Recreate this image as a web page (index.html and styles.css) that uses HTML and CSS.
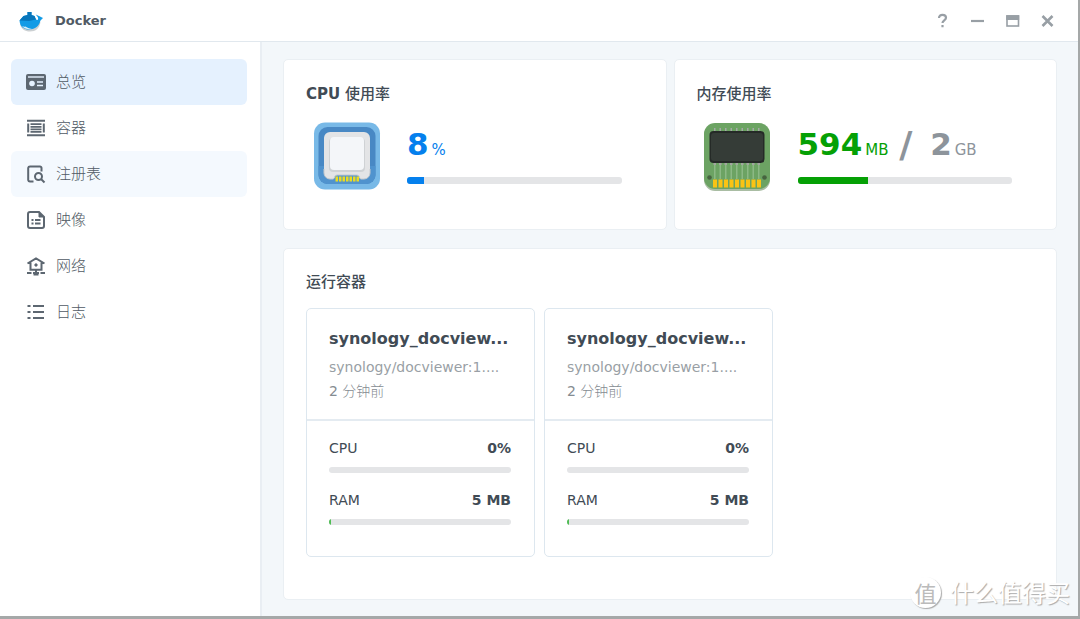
FILE: index.html
```html
<!DOCTYPE html>
<html lang="zh-CN">
<head>
<meta charset="utf-8">
<title>Docker</title>
<link rel="stylesheet" href="styles.css">
</head>
<body>
<div class="window">
  <header class="titlebar">
    <svg class="logo" width="26" height="22" viewBox="0 0 26 22" aria-hidden="true">
      <path d="M2 14c1 5 5 7.500 10 7.500 6 0 9-3 10.500-9l-3-2z" fill="#8d969c" opacity=".45"/>
      <path d="M1.500 10.500 5.500 6l4-1V2h4v3l3 1 1.500 3.500 1.500.500c.8-.6.8-1.500.2-3L17.700 4.500l3.300 1.500 4 2-2.500 2.500C21 16 17.500 19.500 11 19.500c-5 0-9-2.500-9.500-9z" fill="#129be6"/>
      <path d="M1.500 10.500 5.500 6l4-1V2h4v3l3 1 1.500 3.500-7 1.500z" fill="#0876bb"/>
      <path d="M4 16c2.500 3 6 3.800 10 3-3-.3-5-1.500-6.500-2.500-1 .3-2 .3-3.500-.5z" fill="#d9edf8"/>
    </svg>
    <h1 class="app-name">Docker</h1>
    <div class="controls">
      <button class="control" aria-label="帮助"><svg width="15" height="16" viewBox="0 0 15 16"><path d="M4 5C4 2.800 5.500 1.800 7.500 1.800S11 3 11 4.800c0 2.500-3.500 2.700-3.500 5.200M7.500 12v2.200" fill="none" stroke="#989fa5" stroke-width="2.200"/></svg></button>
      <button class="control" aria-label="最小化"><svg width="15" height="16" viewBox="0 0 15 16"><path d="M1 8h13" stroke="#989fa5" stroke-width="2.200"/></svg></button>
      <button class="control" aria-label="最大化"><svg width="15" height="16" viewBox="0 0 15 16"><rect x="2" y="3" width="11.500" height="10" fill="none" stroke="#989fa5" stroke-width="1.600"/><path d="M1.200 2.200h13V7h-13z" fill="#989fa5"/></svg></button>
      <button class="control" aria-label="关闭"><svg width="15" height="16" viewBox="0 0 15 16"><path d="m2.500 3 10 10M12.500 3l-10 10" stroke="#989fa5" stroke-width="2.600"/></svg></button>
    </div>
  </header>
  <div class="body">
    <nav class="sidebar">
      <a class="nav-item selected" href="#overview"><svg width="20" height="20" viewBox="0 0 20 20"><rect y="2" width="20" height="16" rx="2" fill="#5d6771"/><path d="M2 5h16" stroke="#e5f1fe" stroke-width="1.400"/><circle cx="6" cy="11.500" r="2.800" fill="#e5f1fe"/><path d="M11 10h6M11 13.500h6" stroke="#e5f1fe" stroke-width="1.400"/></svg>总览</a>
      <a class="nav-item" href="#container"><svg width="20" height="20" viewBox="0 0 20 20"><path d="M1 2.800h18M1 17.200h18M2.200 5.500v9M17.800 5.500v9" stroke="#5d6771" stroke-width="2"/><path d="M4.500 6.200h11M4.500 8.800h11M4.500 11.300h11M4.500 13.900h11" stroke="#5d6771" stroke-width="1.700"/></svg>容器</a>
      <a class="nav-item hovered" href="#registry"><svg width="20" height="20" viewBox="0 0 20 20" fill="none" stroke="#5d6771" stroke-width="2"><path d="M7.500 17.500H4A1.800 1.800 0 0 1 2.200 16V4A1.800 1.800 0 0 1 4 2.500h10A1.500 1.500 0 0 1 15.500 4v3.500"/><circle cx="12.500" cy="12.500" r="3.500"/><path d="m15 15 3.500 3.500"/></svg>注册表</a>
      <a class="nav-item" href="#image"><svg width="20" height="20" viewBox="0 0 20 20" fill="none" stroke="#5d6771" stroke-width="2"><path d="M13 2H4a2 2 0 0 0-2 2v12a2 2 0 0 0 2 2h12a2 2 0 0 0 2-2V7z"/><path d="M13 2v5h5z" fill="#5d6771" stroke-width="1"/><path d="M5.500 10h2M9 10h5.500M5.500 13.500h2M9 13.500h5.500"/></svg>映像</a>
      <a class="nav-item" href="#network"><svg width="20" height="20" viewBox="0 0 20 20" fill="none" stroke="#5d6771" stroke-width="2"><path d="M1.500 7.500 10 2.500l8.500 5M4.500 6.500v7.200h11V6.500M10 13.700V18M1 17h4.500M7 17h6M14.500 17H19M7.500 18.500h5"/><circle cx="10" cy="9" r="1.200" fill="#5d6771" stroke-width="1"/></svg>网络</a>
      <a class="nav-item" href="#log"><svg width="20" height="20" viewBox="0 0 20 20"><path d="M1.500 4h3M7 4h11M1.500 10h3M7 10h11M1.500 16h3M7 16h11" stroke="#5d6771" stroke-width="2.200"/></svg>日志</a>
    </nav>
    <main class="main">
      <div class="usage">
        <section class="panel">
          <h2 class="panel-title"><strong>CPU</strong> 使用率</h2>
          <div class="meter">
            <svg class="chip" width="68" height="70" viewBox="0 0 68 70" aria-hidden="true">
              <rect x="1" y="1.500" width="66" height="67" rx="11" fill="#78b9e7"/>
              <rect x="5.500" y="6" width="57" height="57" rx="9" fill="#4888c4"/>
              <path d="M5.500 45v9a9 9 0 0 0 9 9h39a9 9 0 0 0 9-9v-9z" fill="#5093ce"/>
              <path d="M17 11h34a6 6 0 0 1 6 6v35a6 6 0 0 1-6 6h-3c-2 0-1-4-4-4H24c-3 0-2 4-4 4h-3a6 6 0 0 1-6-6V17a6 6 0 0 1 6-6z" fill="#e3e4e6"/>
              <path d="M11 48v4a6 6 0 0 0 6 6h3c2 0 1-4 4-4h20c3 0 2 4 4 4h3a6 6 0 0 0 6-6v-4" fill="none" stroke="#c6cace"/>
              <rect x="16" y="17" width="36" height="34" rx="4" fill="#cfd2d5"/>
              <rect x="17" y="16" width="34" height="33" rx="4" fill="#f4f6f9"/>
              <path d="M22.500 58h23.500" stroke="#eadb20" stroke-width="5" stroke-dasharray="2.500 1"/>
            </svg>
            <div class="reading">
              <p class="figures cpu"><strong>8</strong><span class="unit">%</span></p>
              <div class="bar"><div class="fill cpu-fill" style="width:8%"></div></div>
            </div>
          </div>
        </section>
        <section class="panel">
          <h2 class="panel-title">内存使用率</h2>
          <div class="meter">
            <svg class="chip" width="68" height="70" viewBox="0 0 68 70" aria-hidden="true">
              <rect x="0" y="3" width="66" height="67" rx="11" fill="#a9bda3"/>
              <rect x="0" y="2" width="66" height="66" rx="11" fill="#6ca363"/>
              <path d="M10 8.500h47.500" stroke="#a4a9a6" stroke-width="3" stroke-dasharray="1.500 4"/>
              <path d="M10 50h47.500" stroke="#8cb985" stroke-width="16" stroke-dasharray="1.500 4"/>
              <path d="M9.500 42.500h47.500" stroke="#a1a69f" stroke-width="3" stroke-dasharray="2.500 3"/>
              <rect x="5.500" y="10" width="55" height="32" rx="4" fill="#252a27"/>
              <rect x="7" y="12" width="52" height="28" rx="3" fill="#353c37"/>
              <circle cx="5.500" cy="56.500" r="2.300" fill="#46643f"/><circle cx="60.500" cy="56.500" r="2.300" fill="#46643f"/>
              <path d="M9 62.500h48" stroke="#fac314" stroke-width="8" stroke-dasharray="4 1.500"/>
            </svg>
            <div class="reading">
              <p class="figures ram"><strong>594</strong><span class="unit">MB</span> <span class="total"><strong class="slash">/</strong> <strong>2</strong><span class="unit">GB</span></span></p>
              <div class="bar"><div class="fill ram-fill" style="width:33%"></div></div>
            </div>
          </div>
        </section>
      </div>
      <section class="panel running">
        <h2 class="panel-title">运行容器</h2>
        <div class="containers">
          <article class="container-card">
            <div class="summary">
              <h3 class="name">synology_docview...</h3>
              <p class="image">synology/docviewer:1....</p>
              <p class="age"><span>2</span> 分钟前</p>
            </div>
            <div class="stats">
              <div class="stat"><span>CPU</span><strong>0%</strong></div>
              <div class="bar thin"></div>
              <div class="stat"><span>RAM</span><strong>5 MB</strong></div>
              <div class="bar thin"><div class="fill light-fill" style="width:1%"></div></div>
            </div>
          </article>
          <article class="container-card">
            <div class="summary">
              <h3 class="name">synology_docview...</h3>
              <p class="image">synology/docviewer:1....</p>
              <p class="age"><span>2</span> 分钟前</p>
            </div>
            <div class="stats">
              <div class="stat"><span>CPU</span><strong>0%</strong></div>
              <div class="bar thin"></div>
              <div class="stat"><span>RAM</span><strong>5 MB</strong></div>
              <div class="bar thin"><div class="fill light-fill" style="width:1%"></div></div>
            </div>
          </article>
        </div>
      </section>
    </main>
  </div>
</div>
<div class="watermark"><span class="seal">值</span><span>什么值得买</span></div>
</body>
</html>
```
FILE: styles.css
```css
* {
  box-sizing: border-box;
}

body {
  margin: 0;
  padding: 0 2px 3px 0;
  min-height: 100vh;
  display: flex;
  background: #a5a8a8;
  color: #414b55;
  font: 15px/24px "DejaVu Sans", "Noto Sans CJK SC", sans-serif;
}

h1, h2, h3, p {
  margin: 0;
}

.window {
  flex: 1;
  min-width: 0;
  display: flex;
  flex-direction: column;
  background: #fff;
}

.titlebar {
  display: flex;
  align-items: center;
  height: 42px;
  padding: 0 23px 0 18px;
  border-bottom: 1px solid #e1e8ee;
}

.app-name {
  margin-left: 11px;
  font-size: 13px;
  font-weight: bold;
  color: #505a64;
}

.controls {
  display: flex;
  gap: 20px;
  margin-left: auto;
}

.control {
  display: flex;
  padding: 0;
  border: 0;
  background: none;
}

.body {
  flex: 1;
  display: flex;
}

.sidebar {
  flex: none;
  width: 262px;
  padding: 17px 13px 0 11px;
  border-right: 2px solid #e9eef3;
}

.nav-item {
  display: flex;
  align-items: center;
  gap: 10px;
  height: 46px;
  padding: 0 15px;
  border-radius: 6px;
  color: #505a64;
  font-weight: 300;
  text-decoration: none;
}

.selected {
  background: #e5f1fe;
}

.hovered {
  background: #f4f9fe;
}

.main {
  flex: 1;
  min-width: 0;
  display: flex;
  flex-direction: column;
  gap: 18px;
  padding: 17px 21px 16px;
  background: #f3f7fa;
}

.usage {
  display: grid;
  grid-template-columns: 1fr 1fr;
  gap: 7px;
}

.panel {
  padding: 22px 22px 21px;
  border: 1px solid #eaeff3;
  border-radius: 5px;
  background: #fff;
}

.running {
  flex: 1;
  padding-top: 21px;
}

.panel-title {
  font-size: 15px;
  font-weight: 500;
}

.meter {
  display: flex;
  gap: 26px;
  padding: 15px 22px 17px 7px;
}

.chip {
  flex: none;
}

.reading {
  flex: 1;
}

.figures {
  height: 46px;
  margin-bottom: 10px;
  line-height: 46px;
  white-space: nowrap;
}

.figures strong {
  font-size: 31px;
}

.figures .slash {
  margin-right: 13px;
  font-size: 36px;
  line-height: 1;
  vertical-align: -2px;
}

.unit {
  margin-left: 3px;
}

.cpu {
  color: #0580ed;
}

.ram {
  color: #05a005;
}

.total {
  margin-left: 6px;
  color: #8d949b;
}

.bar {
  height: 7px;
  border-radius: 3px;
  background: #e4e5e7;
  overflow: hidden;
}

.thin {
  height: 6px;
}

.fill {
  height: 100%;
}

.cpu-fill {
  background: #0580ed;
}

.ram-fill {
  background: #05a005;
}

.light-fill {
  background: #50bd55;
}

.containers {
  display: flex;
  gap: 9px;
  margin-top: 14px;
}

.container-card {
  width: 229px;
  border: 1px solid #dde7ef;
  border-radius: 5px;
}

.summary {
  padding: 18px 22px 16px;
  border-bottom: 2px solid #e4ebf1;
}

.name,
.image {
  overflow: hidden;
  text-overflow: ellipsis;
  white-space: nowrap;
}

.name {
  margin-bottom: 4px;
  font-size: 16px;
}

.image,
.age {
  color: #999fa5;
  font-size: 14px;
}

.age {
  color: #858c92;
  font-weight: 300;
}

.age span {
  font-weight: 400;
}

.stats {
  display: grid;
  gap: 7px;
  padding: 15px 23px 31px 22px;
}

.stat {
  display: flex;
  justify-content: space-between;
  font-size: 14px;
}

.bar + .stat {
  margin-top: 8px;
}

.watermark {
  position: absolute;
  right: 10px;
  bottom: 10px;
  display: flex;
  align-items: center;
  gap: 9px;
  color: #fff;
  font: 24px/34px "Noto Sans CJK SC", sans-serif;
  text-shadow: 1px 1px 1px #aaa;
}

.seal {
  width: 31px;
  height: 31px;
  border-radius: 50%;
  background: #fff;
  box-shadow: 1px 1px 1px #aaa;
  color: #bbb;
  font-size: 22px;
  line-height: 30px;
  text-align: center;
  text-shadow: none;
}
```
